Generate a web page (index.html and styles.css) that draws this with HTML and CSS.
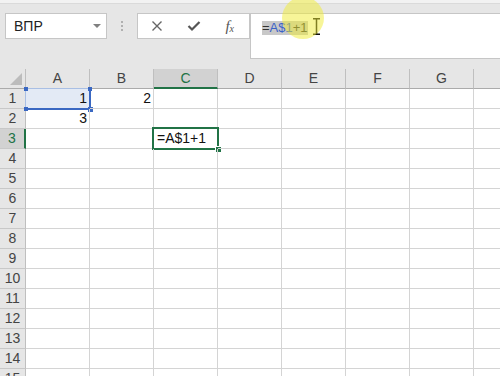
FILE: index.html
```html
<!DOCTYPE html>
<html lang="ru">
<head>
    <meta charset="UTF-8">
    <title>Excel - ВПР</title>
    <link rel="stylesheet" href="styles.css">
</head>
<body>
    <div class="app">
        <div class="ribbon-edge"></div>
        <!-- Name box + formula bar -->
        <div class="toolbar">
            <div class="name-box">
                <span>ВПР</span>
                <span class="caret"></span>
            </div>
            <div class="grip"><i></i><i></i><i></i></div>
            <div class="fx-buttons">
                <svg class="icon" width="12" height="12" viewBox="0 0 12 12"><path d="M1.5 1.5 L10.5 10.5 M10.5 1.5 L1.5 10.5" stroke="#666" stroke-width="1.4" fill="none"/></svg>
                <svg class="icon" width="14" height="12" viewBox="0 0 14 12"><path d="M1.5 6 L5 9.5 L12.5 2" stroke="#555" stroke-width="2.2" fill="none"/></svg>
                <span class="fx">f<sub>x</sub></span>
            </div>
            <div class="formula">
                <span class="sel"><span class="plain">=</span><span class="ref">A$1</span><span class="plain">+1</span></span>
                <svg class="ibeam" width="7" height="17" viewBox="0 0 7 17"><path d="M0 0.75 H7 M0 16.25 H7 M3.5 0.75 V16.25" stroke="#111" stroke-width="1.5" fill="none"/></svg>
                <div class="spot"></div>
            </div>
        </div>

        <!-- Grid -->
        <div class="sheet">
            <div class="row head">
                <div class="corner"><span class="tri"></span></div>
                <div class="col-head">A</div>
                <div class="col-head">B</div>
                <div class="col-head active">C</div>
                <div class="col-head">D</div>
                <div class="col-head">E</div>
                <div class="col-head">F</div>
                <div class="col-head">G</div>
                <div class="col-head last"></div>
            </div>
            <div class="row">
                <div class="row-head">1</div>
                <div class="cell num ref-cell">1<span class="ref-box"><b class="h tl"></b><b class="h tr"></b><b class="h bl"></b><b class="h br"></b></span></div>
                <div class="cell num">2</div>
                <div class="cell"></div><div class="cell"></div><div class="cell"></div><div class="cell"></div><div class="cell"></div><div class="cell last"></div>
            </div>
            <div class="row">
                <div class="row-head">2</div>
                <div class="cell num">3</div>
                <div class="cell"></div><div class="cell"></div><div class="cell"></div><div class="cell"></div><div class="cell"></div><div class="cell"></div><div class="cell last"></div>
            </div>
            <div class="row">
                <div class="row-head active">3</div>
                <div class="cell"></div>
                <div class="cell"></div>
                <div class="cell edit">=A$1+1<span class="active-box"><b class="fill"></b></span></div>
                <div class="cell"></div><div class="cell"></div><div class="cell"></div><div class="cell"></div><div class="cell last"></div>
            </div>
            <div class="row"><div class="row-head">4</div><div class="cell"></div><div class="cell"></div><div class="cell"></div><div class="cell"></div><div class="cell"></div><div class="cell"></div><div class="cell"></div><div class="cell last"></div></div>
            <div class="row"><div class="row-head">5</div><div class="cell"></div><div class="cell"></div><div class="cell"></div><div class="cell"></div><div class="cell"></div><div class="cell"></div><div class="cell"></div><div class="cell last"></div></div>
            <div class="row"><div class="row-head">6</div><div class="cell"></div><div class="cell"></div><div class="cell"></div><div class="cell"></div><div class="cell"></div><div class="cell"></div><div class="cell"></div><div class="cell last"></div></div>
            <div class="row"><div class="row-head">7</div><div class="cell"></div><div class="cell"></div><div class="cell"></div><div class="cell"></div><div class="cell"></div><div class="cell"></div><div class="cell"></div><div class="cell last"></div></div>
            <div class="row"><div class="row-head">8</div><div class="cell"></div><div class="cell"></div><div class="cell"></div><div class="cell"></div><div class="cell"></div><div class="cell"></div><div class="cell"></div><div class="cell last"></div></div>
            <div class="row"><div class="row-head">9</div><div class="cell"></div><div class="cell"></div><div class="cell"></div><div class="cell"></div><div class="cell"></div><div class="cell"></div><div class="cell"></div><div class="cell last"></div></div>
            <div class="row"><div class="row-head">10</div><div class="cell"></div><div class="cell"></div><div class="cell"></div><div class="cell"></div><div class="cell"></div><div class="cell"></div><div class="cell"></div><div class="cell last"></div></div>
            <div class="row"><div class="row-head">11</div><div class="cell"></div><div class="cell"></div><div class="cell"></div><div class="cell"></div><div class="cell"></div><div class="cell"></div><div class="cell"></div><div class="cell last"></div></div>
            <div class="row"><div class="row-head">12</div><div class="cell"></div><div class="cell"></div><div class="cell"></div><div class="cell"></div><div class="cell"></div><div class="cell"></div><div class="cell"></div><div class="cell last"></div></div>
            <div class="row"><div class="row-head">13</div><div class="cell"></div><div class="cell"></div><div class="cell"></div><div class="cell"></div><div class="cell"></div><div class="cell"></div><div class="cell"></div><div class="cell last"></div></div>
            <div class="row"><div class="row-head">14</div><div class="cell"></div><div class="cell"></div><div class="cell"></div><div class="cell"></div><div class="cell"></div><div class="cell"></div><div class="cell"></div><div class="cell last"></div></div>
            <div class="row"><div class="row-head">15</div><div class="cell"></div><div class="cell"></div><div class="cell"></div><div class="cell"></div><div class="cell"></div><div class="cell"></div><div class="cell"></div><div class="cell last"></div></div>
        </div>
    </div>
</body>
</html>
```

FILE: styles.css
```css
body {
    margin: 0;
    font-family: "Liberation Sans", Arial, sans-serif;
    font-size: 13px;
    color: #222;
    background: #fff;
}

.app {
    width: 500px;
    height: 376px;
    overflow: hidden;
}

.ribbon-edge {
    height: 3px;
    background: #f2f2f2;
    border-bottom: 1px solid #dadada;
}

.toolbar {
    height: 65px;
    background: #e6e6e6;
    display: flex;
    align-items: flex-start;
    padding-top: 9px;
    box-sizing: border-box;
}

.name-box {
    margin-left: 5px;
    width: 102px;
    height: 26px;
    box-sizing: border-box;
    background: #fff;
    border: 1px solid #c6c6c6;
    display: flex;
    align-items: center;
    justify-content: space-between;
    padding: 0 5px 0 8px;
    font-size: 14px;
}

.caret {
    width: 0;
    height: 0;
    border-left: 4px solid transparent;
    border-right: 4px solid transparent;
    border-top: 4px solid #808080;
}

.grip {
    width: 30px;
    height: 26px;
    display: flex;
    flex-direction: column;
    align-items: center;
    justify-content: center;
    gap: 2px;
}

.grip i {
    width: 2px;
    height: 2px;
    background: #b0b0b0;
}

.fx-buttons {
    width: 113px;
    height: 26px;
    box-sizing: border-box;
    background: #fff;
    border: 1px solid #c6c6c6;
    display: flex;
    align-items: center;
    justify-content: space-between;
    padding: 0 15px 0 13px;
}

.fx {
    font-family: "Liberation Serif", "Times New Roman", serif;
    font-style: italic;
    font-size: 15px;
    color: #555;
    line-height: 1;
}

.fx sub {
    font-size: 10px;
    vertical-align: -1px;
}

.formula {
    position: relative;
    flex: 1;
    height: 46px;
    box-sizing: border-box;
    background: #fff;
    border: 1px solid #c6c6c6;
    border-right: none;
    padding: 6px 0 0 11px;
    display: flex;
    align-items: flex-start;
}

.sel {
    background: #c8c8c8;
    line-height: 14px;
    height: 14px;
    margin-top: 1px;
}

.plain {
    color: #333;
}

.ref {
    color: #3a62c8;
}

.ibeam {
    margin-left: 5px;
    margin-top: -2px;
}

.spot {
    position: absolute;
    left: 31px;
    top: -17px;
    width: 42px;
    height: 42px;
    border-radius: 50%;
    background: rgba(240, 236, 50, 0.5);
}

/* grid */
.sheet {
    background: #fff;
}

.row {
    display: flex;
    height: 20px;
}

.row.head {
    background: #e6e6e6;
}

.corner {
    position: relative;
    width: 26px;
    flex: none;
    box-sizing: border-box;
    border-right: 1px solid #bfbfbf;
    border-bottom: 1px solid #ababab;
}

.tri {
    position: absolute;
    right: 3px;
    bottom: 3px;
    width: 0;
    height: 0;
    border-left: 12px solid transparent;
    border-bottom: 12px solid #bcbcbc;
}

.col-head {
    width: 64px;
    flex: none;
    box-sizing: border-box;
    border-right: 1px solid #bfbfbf;
    border-bottom: 1px solid #ababab;
    text-align: center;
    line-height: 19px;
    color: #444;
    font-size: 14px;
}

.col-head.active {
    background: #d2d2d2;
    color: #217346;
    border-bottom: 2px solid #217346;
}

.col-head.last,
.cell.last {
    flex: 1;
    border-right: none;
}

.row-head {
    width: 26px;
    flex: none;
    box-sizing: border-box;
    background: #e6e6e6;
    border-right: 1px solid #bfbfbf;
    border-bottom: 1px solid #c8c8c8;
    text-align: center;
    line-height: 19px;
    color: #444;
    font-size: 14px;
}

.row-head.active {
    background: #d2d2d2;
    color: #217346;
    border-right: 2px solid #217346;
}

.cell {
    position: relative;
    width: 64px;
    flex: none;
    box-sizing: border-box;
    border-right: 1px solid #d4d4d4;
    border-bottom: 1px solid #d4d4d4;
    line-height: 19px;
    padding: 0 2px 0 3px;
    color: #111;
    font-size: 14px;
}

.cell.num {
    text-align: right;
}

.ref-cell {
    background: #e3eaf5;
}

.ref-box {
    position: absolute;
    left: -1px;
    top: -1px;
    right: -2px;
    bottom: -2px;
    border-top: 1px solid #a9bfe4;
    border-left: 1px solid #a9bfe4;
    border-right: 2px solid #3a68c2;
    border-bottom: 2px solid #3a68c2;
}

.h {
    position: absolute;
    width: 4px;
    height: 4px;
    background: #3a68c2;
}

.h.tl { left: -2px; top: -2px; }
.h.tr { right: -3px; top: -2px; }
.h.bl { left: -2px; bottom: -3px; }
.h.br { right: -4px; bottom: -4px; width: 5px; height: 5px; }

.active-box {
    position: absolute;
    left: -2px;
    top: -2px;
    right: -2px;
    bottom: -2px;
    border: 2px solid #217346;
}

.fill {
    position: absolute;
    right: -4px;
    bottom: -4px;
    width: 5px;
    height: 5px;
    background: #217346;
    border-left: 1px solid #fff;
    border-top: 1px solid #fff;
}
```
